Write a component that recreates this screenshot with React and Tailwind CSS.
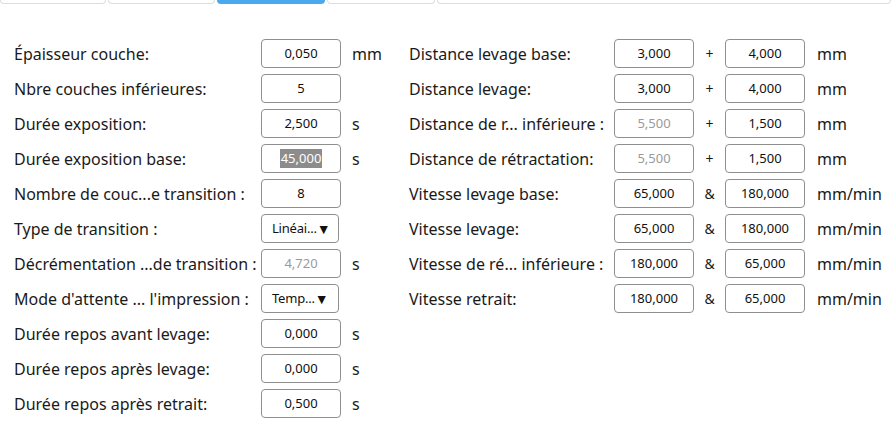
import React from "react";

const leftRows = [
  { label: "Épaisseur couche:", value: "0,050", unit: "mm" },
  { label: "Nbre couches inférieures:", value: "5", unit: "" },
  { label: "Durée exposition:", value: "2,500", unit: "s" },
  { label: "Durée exposition base:", value: "45,000", unit: "s", selected: true },
  { label: "Nombre de couc...e transition :", value: "8", unit: "" },
  { label: "Type de transition :", value: "Linéai...", unit: "", select: true },
  { label: "Décrémentation ...de transition :", value: "4,720", unit: "s", disabled: true },
  { label: "Mode d'attente ... l'impression :", value: "Temp...", unit: "", select: true },
  { label: "Durée repos avant levage:", value: "0,000", unit: "s" },
  { label: "Durée repos après levage:", value: "0,000", unit: "s" },
  { label: "Durée repos après retrait:", value: "0,500", unit: "s" },
];

const rightRows = [
  { label: "Distance levage base:", a: "3,000", sep: "+", b: "4,000", unit: "mm" },
  { label: "Distance levage:", a: "3,000", sep: "+", b: "4,000", unit: "mm" },
  { label: "Distance de r... inférieure :", a: "5,500", aDisabled: true, sep: "+", b: "1,500", unit: "mm" },
  { label: "Distance de rétractation:", a: "5,500", aDisabled: true, sep: "+", b: "1,500", unit: "mm" },
  { label: "Vitesse levage base:", a: "65,000", sep: "&", b: "180,000", unit: "mm/min" },
  { label: "Vitesse levage:", a: "65,000", sep: "&", b: "180,000", unit: "mm/min" },
  { label: "Vitesse de ré... inférieure :", a: "180,000", sep: "&", b: "65,000", unit: "mm/min" },
  { label: "Vitesse retrait:", a: "180,000", sep: "&", b: "65,000", unit: "mm/min" },
];

// champ de saisie
const Field = ({ value, disabled, selected }) => (
  <div className="w-[80px] h-[29px] shrink-0 rounded-[4px] border border-[#8f8f8f] bg-white flex items-center justify-center text-[13px]">
    {selected ? (
      <span className="bg-[#8c8c8c] text-white px-px">{value}</span>
    ) : (
      <span className={disabled ? "text-[#9a9a9a]" : "text-[#111]"}>{value}</span>
    )}
  </div>
);

const Dropdown = ({ value }) => (
  <div className="w-[78px] h-[29px] shrink-0 rounded-[4px] border border-[#8f8f8f] bg-white flex items-center pl-[10px] text-[13px] text-[#111]">
    <span className="tracking-[-0.2px]">{value}</span>
    <span className="text-[14px] leading-none">▼</span>
  </div>
);

export default function App() {
  return (
    <div
      className="w-[891px] h-[442px] bg-white overflow-hidden text-[#1a1a1a]"
      style={{ fontFamily: '"Noto Sans", sans-serif' }}
    >
      {/* onglets */}
      <div className="flex h-[4px] gap-[2px]">
        <div className="w-[106px] border-x border-b border-[#dedede] rounded-b-[4px]" />
        <div className="w-[107px] border-x border-b border-[#dedede] rounded-b-[4px]" />
        <div className="w-[108px] bg-[#4aa8ec] rounded-b-[4px]" />
        <div className="w-[108px] border-x border-b border-[#dedede] rounded-b-[4px]" />
        <div className="flex-1 border-x border-b border-[#dedede] rounded-b-[4px]" />
      </div>

      <div className="flex pt-[32px]">
        <div className="pl-[14px] w-[409px] shrink-0">
          {leftRows.map((row) => (
            <div key={row.label} className="h-[35px] flex items-center">
              <div className="w-[247px] shrink-0 text-[16px] whitespace-nowrap">{row.label}</div>
              {row.select ? (
                <Dropdown value={row.value} />
              ) : (
                <Field value={row.value} disabled={row.disabled} selected={row.selected} />
              )}
              <div className="pl-[11px] text-[16px]">{row.unit}</div>
            </div>
          ))}
        </div>

        <div>
          {rightRows.map((row) => (
            <div key={row.label} className="h-[35px] flex items-center">
              <div className="w-[205px] shrink-0 text-[16px] whitespace-nowrap">{row.label}</div>
              <Field value={row.a} disabled={row.aDisabled} />
              <div className="w-[31px] text-center text-[14px]">{row.sep}</div>
              <Field value={row.b} />
              <div className="pl-[12px] text-[16px]">{row.unit}</div>
            </div>
          ))}
        </div>
      </div>
    </div>
  );
}
